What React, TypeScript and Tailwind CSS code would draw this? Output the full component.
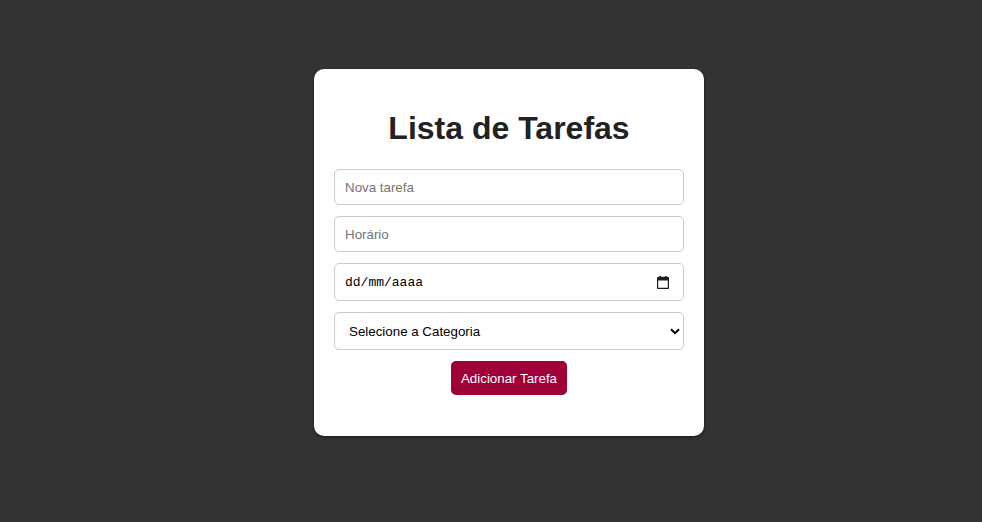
const field =
  "block w-full h-[36px] px-[10px] pt-[2px] border border-[#ccc] rounded-[5px] bg-white text-[13.33px] text-black outline-none placeholder:text-[#757575]";

function CalendarIcon() {
  return (
    <svg width="12" height="13" viewBox="0 0 12 13" aria-hidden="true">
      <rect x="0.5" y="1.5" width="11" height="11" rx="1" fill="none" stroke="#1f1f1f" strokeWidth="1.4" />
      <rect x="0.5" y="1.5" width="11" height="3" fill="#1f1f1f" />
      <rect x="2.5" y="0" width="1.5" height="2.5" fill="#1f1f1f" />
      <rect x="8" y="0" width="1.5" height="2.5" fill="#1f1f1f" />
    </svg>
  );
}

function Chevron() {
  return (
    <svg width="10" height="7" viewBox="0 0 10 7" aria-hidden="true">
      <path d="M1 1.2 L5 5.2 L9 1.2" fill="none" stroke="#000" strokeWidth="2" />
    </svg>
  );
}

export default function App() {
  return (
    <div className="min-h-screen bg-[#333] pt-[69px] pl-[314px] font-['Liberation_Sans',Arial,sans-serif]">
      <div className="w-[390px] bg-white rounded-[10px] p-5 shadow-[0_1px_3px_rgba(0,0,0,0.6)]">
        <h1 className="my-[21.44px] text-center text-[32px] leading-[normal] font-bold text-[#222]">
          Lista de Tarefas
        </h1>

        <input type="text" placeholder="Nova tarefa" className={field} />
        <input type="text" placeholder="Horário" className={`${field} mt-[11px]`} />

        <div className="mt-[11px] flex h-[38px] w-full items-center justify-between rounded-[5px] border border-[#ccc] pl-[10px] pr-[14px] pt-[2px]">
          <span className="font-['Liberation_Mono',monospace] text-[13px] text-black">dd/mm/aaaa</span>
          <CalendarIcon />
        </div>

        <div className="relative mt-[11px]">
          <select className="block h-[38px] w-full appearance-none rounded-[5px] border border-[#ccc] bg-white pl-[14px] pr-[24px] pt-[2px] text-[13.33px] text-black outline-none">
            <option>Selecione a Categoria</option>
            <option>Trabalho</option>
            <option>Pessoal</option>
            <option>Estudos</option>
          </select>
          <span className="pointer-events-none absolute right-[4px] top-[16px] flex">
            <Chevron />
          </span>
        </div>

        <div className="mt-[11px] mb-[21px] flex justify-center">
          <button className="h-[34px] rounded-[5px] bg-[#a00038] px-[10px] pt-[2px] text-[13.33px] text-white">
            Adicionar Tarefa
          </button>
        </div>
      </div>
    </div>
  );
}
